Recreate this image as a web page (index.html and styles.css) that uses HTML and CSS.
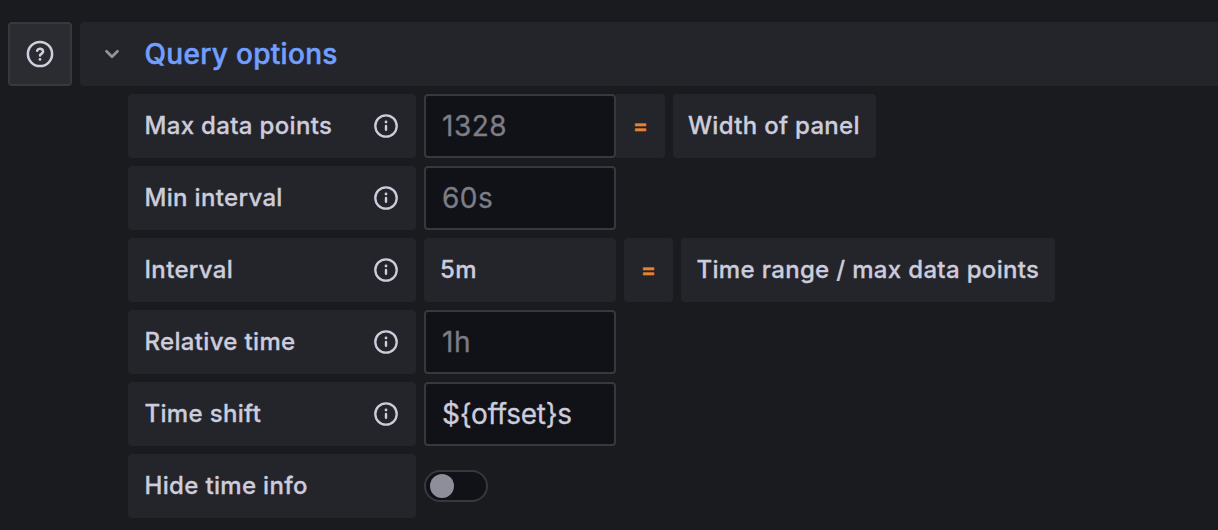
FILE: index.html
```html
<!DOCTYPE html>
<html lang="en">
<head>
<meta charset="utf-8">
<title>Query options</title>
<link rel="stylesheet" href="styles.css">
</head>
<body>
<svg class="defs" width="0" height="0"><symbol id="info" viewBox="0 0 24 24"><circle cx="12" cy="12" r="10.7" fill="none" stroke="currentColor" stroke-width="2.3"/><path d="M12 12v3.7" stroke="currentColor" stroke-width="2.4" stroke-linecap="round"/><circle cx="12" cy="8" r="1.4" fill="currentColor"/></symbol></svg>
<header class="top">
  <button class="help" aria-label="Help"><svg width="28" height="28" viewBox="0 0 28 28" fill="none" stroke="currentColor" stroke-width="2.5" stroke-linecap="round"><circle cx="14" cy="14" r="12.1"/><path d="M11.1 10.7a3.1 3.1 0 0 1 6 .9c0 2.1-3.1 2.3-3.1 3.9"/><circle cx="14" cy="19.4" r="1.4" fill="currentColor" stroke="none"/></svg></button>
  <div class="bar"><svg class="chevron" width="16" height="10" viewBox="0 0 16 10" fill="none" stroke="currentColor" stroke-width="2.7" stroke-linecap="round" stroke-linejoin="round"><path d="M2.5 2.3l5.5 5.5 5.5-5.5"/></svg><h1 class="title">Query options</h1></div>
</header>
<main class="options">
  <div class="row"><label class="label"><span>Max data points</span><svg class="info"><use href="#info"/></svg></label><div class="input muted">1328</div><div class="box equals joined">=</div><div class="box width-note">Width of panel</div></div>
  <div class="row"><label class="label"><span>Min interval</span><svg class="info"><use href="#info"/></svg></label><div class="input muted">60s</div></div>
  <div class="row"><label class="label"><span>Interval</span><svg class="info"><use href="#info"/></svg></label><div class="box value">5m</div><div class="box equals">=</div><div class="box range-note">Time range / max data points</div></div>
  <div class="row"><label class="label"><span>Relative time</span><svg class="info"><use href="#info"/></svg></label><div class="input muted">1h</div></div>
  <div class="row"><label class="label"><span>Time shift</span><svg class="info"><use href="#info"/></svg></label><div class="input shift">${offset}s</div></div>
  <div class="row"><label class="label"><span>Hide time info</span></label><div class="switch"><span class="knob"></span></div></div>
</main>
</body>
</html>
```
FILE: styles.css
```css
* { box-sizing: border-box; }
body { margin: 0; height: 530px; padding: 22px 0 0 8px; overflow: hidden; background: #1a1b1f; color: #ccccdc; font: 500 24px/64px Inter, sans-serif; letter-spacing: .33px; -webkit-text-stroke: .3px currentColor; }
.defs { display: block; }
.top { display: flex; gap: 8px; height: 64px; }
.help { display: flex; align-items: center; justify-content: center; width: 64px; padding: 0; color: #d0d0dc; background: #2b2c32; border: 2px solid #37383d; border-radius: 4px; }
.bar { display: flex; flex: 1; align-items: center; gap: 24.5px; padding-left: 24px; background: #24252a; border-radius: 4px 0 0 4px; }
.chevron { color: #92929a; }
.title { margin: 0; color: #729fff; font-size: 28px; font-weight: 500; letter-spacing: .3px; -webkit-text-stroke: .5px currentColor; }
.options { display: grid; gap: 8px; margin: 8px 0 0 120px; }
.row { display: flex; gap: 8px; height: 64px; }
.label { display: flex; align-items: center; justify-content: space-between; width: 288px; padding: 0 18px 0 16.5px; background: #24252b; border-radius: 4px; }
.info { width: 24px; height: 24px; }
.input { width: 192px; padding-left: 16px; background: #111217; border: 2px solid #37383d; border-radius: 4px; font-size: 28px; font-weight: 400; line-height: 60px; letter-spacing: .5px; }
.shift { letter-spacing: -.25px; }
.muted { color: #7c7d87; }
.box { background: #24252b; border-radius: 4px; white-space: nowrap; }
.value { width: 192px; padding-left: 16px; }
.equals { width: 49px; color: #e58332; font-weight: 500; font-size: 23px; text-align: center; -webkit-text-stroke: .6px currentColor; }
.joined { margin-left: -8px; border-radius: 0 4px 4px 0; }
.width-note { width: 203px; padding-left: 15px; letter-spacing: .3px; }
.range-note { width: 374px; padding-left: 15.5px; }
.switch { display: flex; align-items: center; align-self: center; width: 64px; height: 32px; padding-left: 4px; background: #111217; border: 2px solid #37383d; border-radius: 16px; }
.knob { width: 24px; height: 24px; background: #8e8e9b; border-radius: 50%; }
```
